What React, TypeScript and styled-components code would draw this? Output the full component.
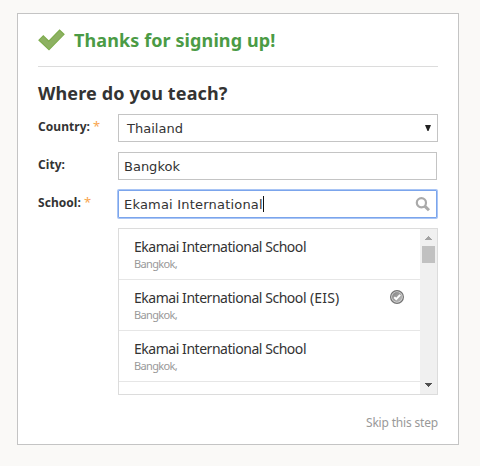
import React from "react";
import styled, { createGlobalStyle } from "styled-components";

const humanist = `"Noto Sans", Tahoma, sans-serif`;
const wide = `"DejaVu Sans", Verdana, sans-serif`;

const GlobalStyle = createGlobalStyle`
  *, *::before, *::after { box-sizing: border-box; }
  body { margin: 0; background: #faf9f7; overflow: hidden; }
`;

const Page = styled.main`
  height: 466px;
  padding: 13px 21px 0 17px;
  background: #faf9f7;
  color: #333;
  font-family: ${humanist};
`;

const Card = styled.section`
  display: flex;
  flex-direction: column;
  height: 432px;
  padding: 0 20px;
  border: 1px solid #c4c4c4;
  background: #fff;
`;

const Header = styled.header`
  display: flex;
  align-items: center;
  gap: 9px;
  height: 53px;
  border-bottom: 1px solid #dcdcdc;
  svg { flex: none; }
`;

const Title = styled.h1`
  margin: 0;
  color: #4b9b45;
  font-size: 18px;
  line-height: 22px;
  font-weight: 700;
  letter-spacing: 0.1px;
  white-space: nowrap;
`;

const Question = styled.h2`
  margin: 15px 0 9px;
  font-size: 18px;
  line-height: 23px;
  font-weight: 700;
  letter-spacing: 0.13px;
  white-space: nowrap;
`;

const Form = styled.form`
  display: grid;
  grid-template-columns: 80px 320px;
  row-gap: 10px;
`;

const Label = styled.label`
  padding-top: 5px;
  font-size: 12px;
  line-height: 15px;
  font-weight: 700;
  letter-spacing: 0.05px;
  white-space: nowrap;
`;

const Required = styled.span`
  margin-left: 3px;
  color: #f9a550;
  font-size: 13px;
  font-weight: 400;
`;

const Field = styled.div<{ $select?: boolean; $focused?: boolean }>`
  display: flex;
  align-items: center;
  width: ${(p) => (p.$select ? 320 : 319)}px;
  height: 28px;
  padding: 0 6px 0 ${(p) => (p.$select ? 8 : 5)}px;
  border: 1px solid ${(p) => (p.$focused ? "#7ba5ec" : "#c4c4c4")};
  box-shadow: ${(p) => (p.$focused ? "0 0 0 1px #a9c5f5" : "none")};
  border-radius: ${(p) => (p.$focused ? 1 : 0)}px;
  background: #fff;
  font-family: ${wide};
  font-size: 13px;
  line-height: 16px;
  white-space: nowrap;
`;

const Value = styled.span<{ $spacing?: number }>`
  padding-top: 1px;
  letter-spacing: ${(p) => p.$spacing ?? 0}px;
`;

const Caret = styled.i`
  width: 1px;
  height: 16px;
  background: #111;
`;

const FieldIcon = styled.span`
  display: flex;
  margin-left: auto;
`;

const Results = styled.div`
  display: flex;
  width: 320px;
  height: 167px;
  margin: 10px 0 0 80px;
  border: 1px solid #dcdcdc;
`;

const List = styled.ul`
  flex: 1;
  height: 165px;
  margin: 0;
  padding: 0;
  overflow: hidden;
  list-style: none;
`;

const Item = styled.li`
  display: flex;
  justify-content: space-between;
  height: 51px;
  padding: 9px 15px 0;
  border-bottom: 1px solid #e6e6e6;
  svg { margin-top: 1px; }
`;

const SchoolName = styled.div`
  font-size: 14px;
  line-height: 18px;
  letter-spacing: -0.46px;
  white-space: nowrap;
`;

const Abbreviation = styled.span`
  letter-spacing: 0.2px;
`;

const SchoolCity = styled.div`
  color: #999;
  font-size: 11px;
  line-height: 16px;
  letter-spacing: -0.65px;
`;

const Scrollbar = styled.div`
  display: flex;
  flex-direction: column;
  align-items: center;
  width: 17px;
  background: #f0f0f0;
`;

const ScrollArrow = styled.svg`
  display: block;
  width: 17px;
  height: 17px;
`;

const Thumb = styled.div`
  width: 13px;
  height: 17px;
  background: #c1c1c1;
`;

const Track = styled.div`
  flex: 1;
`;

const Skip = styled.a`
  align-self: flex-end;
  margin-top: 20px;
  color: #999;
  font-size: 12px;
  line-height: 16px;
  letter-spacing: -0.18px;
  white-space: nowrap;
`;

function SuccessCheck() {
  return (
    <svg width="27" height="22" viewBox="0 0 27 22">
      <path d="M1 11.2 5.3 6.9l5.5 5.2L21.6 1l4.4 4.3L11 20.6z" fill="#8db162" stroke="#7dac4c" strokeWidth="1.2" />
    </svg>
  );
}

function SearchIcon() {
  return (
    <svg width="15" height="15" viewBox="0 0 15 15" fill="none" stroke="#aaa">
      <circle cx="6.4" cy="5.7" r="4.6" strokeWidth="2.2" />
      <path d="m9.8 9.1 4.2 4.2" strokeWidth="3" />
    </svg>
  );
}

function VerifiedIcon() {
  return (
    <svg width="15" height="15" viewBox="0 0 15 15">
      <defs>
        <linearGradient id="verified" x1="0" y1="0" x2="1" y2="1">
          <stop offset="0" stopColor="#858585" />
          <stop offset="1" stopColor="#bcbcbc" />
        </linearGradient>
      </defs>
      <circle cx="7" cy="7" r="6.4" fill="#dcdcdc" stroke="#737373" strokeWidth="1.2" />
      <circle cx="7" cy="7" r="5" fill="url(#verified)" />
      <path d="m4.2 7.3 2 1.8 4-4.2" fill="none" stroke="#fff" strokeWidth="2" />
    </svg>
  );
}

const schools = [
  { name: "Ekamai International School", city: "Bangkok," },
  { name: "Ekamai International School", abbreviation: "(EIS)", city: "Bangkok,", verified: true },
  { name: "Ekamai International School", city: "Bangkok," },
];

export default function App() {
  return (
    <>
      <GlobalStyle />
      <Page>
        <Card>
          <Header>
            <SuccessCheck />
            <Title>Thanks for signing up!</Title>
          </Header>
          <Question>Where do you teach?</Question>
          <Form>
            <Label>Country:<Required>*</Required></Label>
            <Field $select>
              <Value $spacing={0.02}>Thailand</Value>
              <FieldIcon>
                <svg width="6" height="6" viewBox="0 0 6 6"><path d="M0 0h6L3.5 6h-1z" fill="#222" /></svg>
              </FieldIcon>
            </Field>
            <Label>City:</Label>
            <Field><Value>Bangkok</Value></Field>
            <Label>School:<Required>*</Required></Label>
            <Field $focused>
              <Value $spacing={0.2}>Ekamai International</Value>
              <Caret />
              <FieldIcon><SearchIcon /></FieldIcon>
            </Field>
          </Form>
          <Results>
            <List>
              {schools.map((school, index) => (
                <Item key={index}>
                  <div>
                    <SchoolName>
                      {school.name}
                      {school.abbreviation && <Abbreviation> {school.abbreviation}</Abbreviation>}
                    </SchoolName>
                    <SchoolCity>{school.city}</SchoolCity>
                  </div>
                  {school.verified && <VerifiedIcon />}
                </Item>
              ))}
            </List>
            <Scrollbar>
              <ScrollArrow viewBox="0 0 17 17"><path d="M5 11h7v-1h-1V9h-1V8H9V7H8v1H7v1H6v1H5z" fill="#a3a3a3" /></ScrollArrow>
              <Thumb />
              <Track />
              <ScrollArrow viewBox="0 0 17 17"><path d="M5 6h7v1h-1v1h-1v1H9v1H8V9H7V8H6V7H5z" fill="#505050" /></ScrollArrow>
            </Scrollbar>
          </Results>
          <Skip>Skip this step</Skip>
        </Card>
      </Page>
    </>
  );
}
